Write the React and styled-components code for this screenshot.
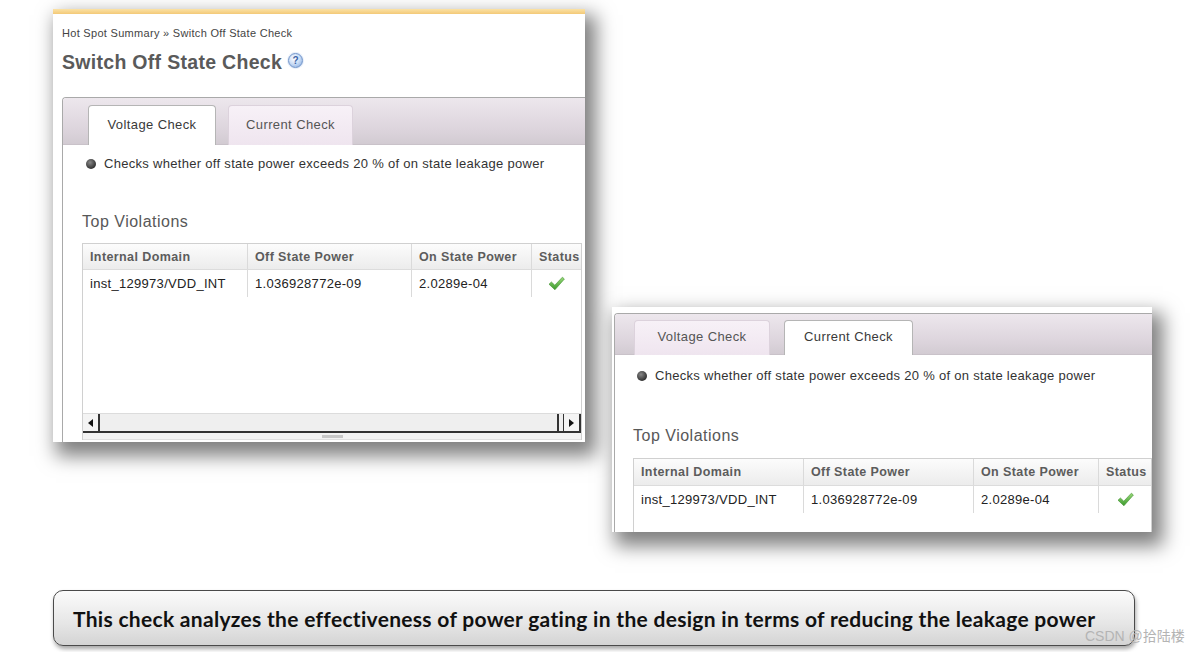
import React from 'react';
import styled, { createGlobalStyle } from 'styled-components';

const GlobalStyle = createGlobalStyle`
  html, body {
    margin: 0;
    padding: 0;
    background: #ffffff;
  }
  body {
    width: 1200px;
    height: 652px;
    overflow: hidden;
    font-family: "Liberation Sans", Arial, sans-serif;
    letter-spacing: 0.3px;
  }
`;

const Slide = styled.div`
  position: relative;
  width: 1200px;
  height: 652px;
  display: flex;
  flex-direction: column;
`;

const Canvas = styled.div`
  position: relative;
  height: 590px;
  flex: none;
`;

// a screenshot pasted on the slide
const Shot = styled.div`
  position: absolute;
  left: ${p => p.$x}px;
  top: ${p => p.$y}px;
  width: ${p => p.$w}px;
  height: ${p => p.$h}px;
  display: flex;
  flex-direction: column;
  overflow: hidden;
  background: #fff;
  box-shadow: 7px 10px 18px 4px rgba(0, 0, 0, 0.5);
`;

const TopBar = styled.div`
  height: 5px;
  flex: none;
  background: linear-gradient(#fbe2a6, #f3c977);
`;

const Header = styled.div`
  padding: 12px 0 0 9px;
  flex: none;
`;

const Crumbs = styled.div`
  font-size: 11px;
  line-height: 14px;
  color: #444;
`;

const Title = styled.h1`
  margin: 10px 0 0;
  font-size: 19.5px;
  line-height: 24px;
  font-weight: bold;
  color: #5a5a5a;
  display: flex;
  align-items: center;
`;

const Help = styled.span`
  margin-left: 6px;
  width: 13px;
  height: 13px;
  border-radius: 50%;
  border: 1px solid #6f93c9;
  box-shadow: 0 0 0 1px #e6eefa;
  background: radial-gradient(circle at 40% 35%, #ffffff 0, #cfe0f7 45%, #7ea5dc 100%);
  color: #3a64a6;
  font-size: 10px;
  line-height: 13px;
  font-weight: bold;
  letter-spacing: 0;
  text-align: center;
  margin-top: -4px;
`;

const Panel = styled.div`
  flex: 1;
  display: flex;
  flex-direction: column;
  margin: ${p => p.$m};
  width: 700px;
  border: 1px solid #a9a9a9;
  border-right: none;
  border-bottom: none;
  border-radius: 4px 0 0 0;
  background: #fff;
`;

const TabStrip = styled.div`
  height: ${p => p.$h}px;
  flex: none;
  display: flex;
  align-items: flex-end;
  gap: ${p => p.$gap}px;
  padding-left: ${p => p.$pl}px;
  background: linear-gradient(#ede7ed, #dcd4dc 70%, #d2cbd2);
  border-top-left-radius: 3px;
  border-bottom: 1px solid #c9c2c9;
`;

const Tab = styled.div`
  width: ${p => p.$w}px;
  height: ${p => p.$h}px;
  box-sizing: border-box;
  display: flex;
  align-items: center;
  justify-content: center;
  font-size: 13px;
  letter-spacing: 0.4px;
  color: ${p => (p.$active ? '#3a3a3a' : '#555')};
  border: 1px solid ${p => (p.$active ? '#b5b5b5' : '#dcd2dc')};
  border-bottom: none;
  border-radius: 4px 4px 0 0;
  margin-bottom: -1px;
  background: ${p => (p.$active ? '#ffffff' : 'linear-gradient(#f7f1f7, #efe5ef)')};
  padding-bottom: ${p => p.$pb || 0}px;
`;

const Body = styled.div`
  flex: 1;
  display: flex;
  flex-direction: column;
  padding-left: ${p => p.$pl}px;
`;

const Note = styled.div`
  margin-top: ${p => p.$mt}px;
  margin-left: 4px;
  display: flex;
  align-items: center;
  gap: 8px;
  font-size: 13px;
  line-height: 16px;
  color: #333;
`;

const Dot = styled.span`
  width: 10px;
  height: 10px;
  border-radius: 50%;
  background: radial-gradient(circle at 40% 35%, #888, #333 70%);
`;

const Section = styled.div`
  margin-top: ${p => p.$mt}px;
  font-size: 16px;
  line-height: 18px;
  letter-spacing: 0.5px;
  color: #585858;
`;

const TableBox = styled.div`
  margin-top: ${p => p.$mt}px;
  width: ${p => p.$w}px;
  flex: 1;
  display: flex;
  flex-direction: column;
  border: 1px solid #d0d0d0;
  border-bottom: none;
  background: #fff;
`;

const Row = styled.div`
  display: grid;
  grid-template-columns: ${p => p.$cols};
  height: ${p => p.$h}px;
  box-sizing: border-box;
  flex: none;
  background: ${p => (p.$head ? 'linear-gradient(#fcfcfc, #ececec)' : '#fff')};
  border-bottom: ${p => (p.$head ? '1px solid #dcdcdc' : 'none')};
`;

const Cell = styled.div`
  display: flex;
  align-items: center;
  justify-content: ${p => (p.$center ? 'center' : 'flex-start')};
  padding-left: ${p => (p.$center ? 0 : 7)}px;
  border-right: 1px solid #dadada;
  white-space: nowrap;
  overflow: hidden;
  font-size: ${p => (p.$head ? 12.5 : 13)}px;
  letter-spacing: ${p => (p.$head ? 0.4 : 0.3)}px;
  font-weight: ${p => (p.$head ? 'bold' : 'normal')};
  color: ${p => (p.$head ? '#5c5c5c' : '#222')};
  &:last-child {
    border-right: none;
  }
`;

const Filler = styled.div`
  flex: 1;
`;

const Scrollbar = styled.div`
  height: 17px;
  flex: none;
  display: flex;
  background: #efefef;
  border-top: 1px solid #dcdcdc;
  border-bottom: 2px solid #333;
`;

const ScrollBtn = styled.div`
  width: 15px;
  flex: none;
  display: flex;
  align-items: center;
  justify-content: center;
  border-right: 2px solid #333;
  border-left: ${p => (p.$left ? 'none' : '1px solid #333')};
  margin-left: ${p => (p.$left ? 0 : 4)}px;
  background: #f4f4f4;
`;

const Arrow = styled.span`
  width: 0;
  height: 0;
  border-top: 4px solid transparent;
  border-bottom: 4px solid transparent;
  ${p => (p.$left ? 'border-right: 5px solid #111;' : 'border-left: 5px solid #111;')}
`;

const Track = styled.div`
  flex: 1;
  border-right: 2px solid #333;
`;

const GripBar = styled.div`
  height: 6px;
  flex: none;
  display: flex;
  justify-content: center;
  align-items: center;
  background: #f3f3f3;
  border-bottom: 1px solid #e0e0e0;
`;

const Grip = styled.span`
  width: 21px;
  height: 3px;
  background: #c8c8c8;
`;

const Spacer = styled.div`
  height: ${p => p.$h}px;
  flex: none;
`;

const Caption = styled.div`
  margin-left: 53px;
  width: 1082px;
  height: 56px;
  box-sizing: border-box;
  display: flex;
  align-items: center;
  padding-left: 19px;
  border: 1.5px solid #4a4a4a;
  border-radius: 10px;
  background: linear-gradient(#fbfbfb, #e6e6e6 60%, #d4d4d4);
  box-shadow: 1px 3px 4px rgba(0, 0, 0, 0.35);
  font-family: Lato, "Open Sans", sans-serif;
  font-weight: bold;
  font-size: 21px;
  letter-spacing: 0.3px;
  color: #111;
`;

const Watermark = styled.div`
  position: absolute;
  left: 1085px;
  top: 625px;
  font-family: "Liberation Sans", "Noto Sans CJK SC", sans-serif;
  font-size: 14px;
  letter-spacing: 0;
  color: #b4b4b4;
`;

const Check = () => (
  <svg width="17" height="15" viewBox="0 0 17 15">
    <defs>
      <linearGradient id="ck" x1="0" y1="0" x2="0" y2="1">
        <stop offset="0" stopColor="#9ad97a" />
        <stop offset="1" stopColor="#3b9a2c" />
      </linearGradient>
    </defs>
    <path d="M1 8.2 L3.4 6 L6.8 9.2 L14.4 1.2 L16.4 3 L6.9 13.8 Z" fill="url(#ck)" stroke="#3c8f2c" strokeWidth="0.6" />
  </svg>
);

const rowData = ['inst_129973/VDD_INT', '1.036928772e-09', '2.0289e-04'];
const heads = ['Internal Domain', 'Off State Power', 'On State Power', 'Status'];

function Grid({ cols, hh, rh }) {
  return (
    <>
      <Row $head $cols={cols} $h={hh}>
        {heads.map(h => (
          <Cell key={h} $head>{h}</Cell>
        ))}
      </Row>
      <Row $cols={cols} $h={rh}>
        {rowData.map(v => (
          <Cell key={v}>{v}</Cell>
        ))}
        <Cell $center><Check /></Cell>
      </Row>
    </>
  );
}

export default function App() {
  return (
    <Slide>
      <GlobalStyle />
      <Canvas>
        <Shot $x={53} $y={9} $w={532} $h={433}>
          <TopBar />
          <Header>
            <Crumbs>Hot Spot Summary » Switch Off State Check</Crumbs>
            <Title>
              Switch Off State Check <Help>?</Help>
            </Title>
          </Header>
          <Panel $m="23px 0 0 9px">
            <TabStrip $h={46} $gap={12} $pl={25}>
              <Tab $active $w={128} $h={40} $pb={2}>Voltage Check</Tab>
              <Tab $w={125} $h={40} $pb={2}>Current Check</Tab>
            </TabStrip>
            <Body $pl={19}>
              <Note $mt={11}>
                <Dot />
                Checks whether off state power exceeds 20 % of on state leakage power
              </Note>
              <Section $mt={41}>Top Violations</Section>
              <TableBox $mt={12} $w={498}>
                <Grid cols="165px 164px 120px 1fr" hh={26} rh={27} />
                <Filler />
                <Scrollbar>
                  <ScrollBtn $left><Arrow $left /></ScrollBtn>
                  <Track />
                  <ScrollBtn><Arrow /></ScrollBtn>
                </Scrollbar>
                <GripBar><Grip /></GripBar>
              </TableBox>
              <Spacer $h={2} />
            </Body>
          </Panel>
        </Shot>

        <Shot $x={612} $y={307} $w={540} $h={225}>
          <Panel $m="6px 0 0 2px">
            <TabStrip $h={40} $gap={14} $pl={19}>
              <Tab $w={136} $h={35} $pb={3}>Voltage Check</Tab>
              <Tab $active $w={129} $h={35} $pb={3}>Current Check</Tab>
            </TabStrip>
            <Body $pl={18}>
              <Note $mt={13}>
                <Dot />
                Checks whether off state power exceeds 20 % of on state leakage power
              </Note>
              <Section $mt={43}>Top Violations</Section>
              <TableBox $mt={13} $w={517}>
                <Grid cols="170px 170px 125px 1fr" hh={27} rh={27} />
                <Filler />
              </TableBox>
            </Body>
          </Panel>
        </Shot>
      </Canvas>
      <Caption>
        This check analyzes the effectiveness of power gating in the design in terms of reducing the leakage power
      </Caption>
      <Watermark>CSDN @拾陆楼</Watermark>
    </Slide>
  );
}
